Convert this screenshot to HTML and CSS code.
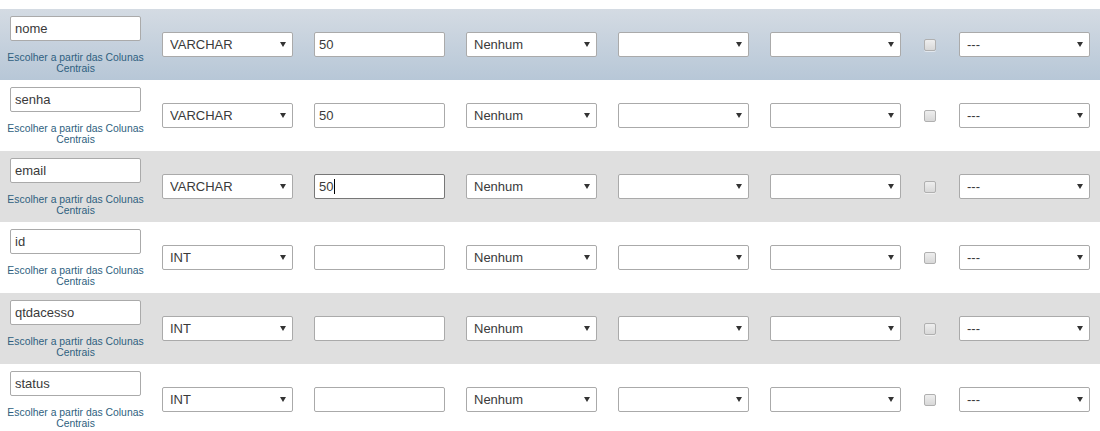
FILE: index.html
```html
<!DOCTYPE html>
<html lang="pt">
<head>
<meta charset="utf-8">
<title>Estrutura da tabela</title>
<link rel="stylesheet" href="styles.css">
</head>
<body>
<div class="table">
  <div class="row row-head">
    <div class="name-cell">
      <input class="field" type="text" value="nome">
      <a class="hint">Escolher a partir das Colunas<br>Centrais</a>
    </div>
    <span class="sel"><select><option>VARCHAR</option></select></span>
    <input class="field" type="text" value="50">
    <span class="sel"><select><option>Nenhum</option></select></span>
    <span class="sel"><select><option></option></select></span>
    <span class="sel"><select><option></option></select></span>
    <span class="check"></span>
    <span class="sel"><select><option>---</option></select></span>
  </div>
  <div class="row">
    <div class="name-cell">
      <input class="field" type="text" value="senha">
      <a class="hint">Escolher a partir das Colunas<br>Centrais</a>
    </div>
    <span class="sel"><select><option>VARCHAR</option></select></span>
    <input class="field" type="text" value="50">
    <span class="sel"><select><option>Nenhum</option></select></span>
    <span class="sel"><select><option></option></select></span>
    <span class="sel"><select><option></option></select></span>
    <span class="check"></span>
    <span class="sel"><select><option>---</option></select></span>
  </div>
  <div class="row row-odd">
    <div class="name-cell">
      <input class="field" type="text" value="email">
      <a class="hint">Escolher a partir das Colunas<br>Centrais</a>
    </div>
    <span class="sel"><select><option>VARCHAR</option></select></span>
    <span class="field field-focus">50<span class="caret"></span></span>
    <span class="sel"><select><option>Nenhum</option></select></span>
    <span class="sel"><select><option></option></select></span>
    <span class="sel"><select><option></option></select></span>
    <span class="check"></span>
    <span class="sel"><select><option>---</option></select></span>
  </div>
  <div class="row">
    <div class="name-cell">
      <input class="field" type="text" value="id">
      <a class="hint">Escolher a partir das Colunas<br>Centrais</a>
    </div>
    <span class="sel"><select><option>INT</option></select></span>
    <input class="field" type="text" value="">
    <span class="sel"><select><option>Nenhum</option></select></span>
    <span class="sel"><select><option></option></select></span>
    <span class="sel"><select><option></option></select></span>
    <span class="check"></span>
    <span class="sel"><select><option>---</option></select></span>
  </div>
  <div class="row row-odd">
    <div class="name-cell">
      <input class="field" type="text" value="qtdacesso">
      <a class="hint">Escolher a partir das Colunas<br>Centrais</a>
    </div>
    <span class="sel"><select><option>INT</option></select></span>
    <input class="field" type="text" value="">
    <span class="sel"><select><option>Nenhum</option></select></span>
    <span class="sel"><select><option></option></select></span>
    <span class="sel"><select><option></option></select></span>
    <span class="check"></span>
    <span class="sel"><select><option>---</option></select></span>
  </div>
  <div class="row">
    <div class="name-cell">
      <input class="field" type="text" value="status">
      <a class="hint">Escolher a partir das Colunas<br>Centrais</a>
    </div>
    <span class="sel"><select><option>INT</option></select></span>
    <input class="field" type="text" value="">
    <span class="sel"><select><option>Nenhum</option></select></span>
    <span class="sel"><select><option></option></select></span>
    <span class="sel"><select><option></option></select></span>
    <span class="check"></span>
    <span class="sel"><select><option>---</option></select></span>
  </div>
</div>
</body>
</html>
```

FILE: styles.css
```css
html, body {
  margin: 0;
  padding: 0;
  background: #ffffff;
  font-family: "Liberation Sans", Arial, sans-serif;
}

.table {
  margin-top: 9px;
}

.row {
  display: grid;
  grid-template-columns: 131px 131px 131px 131px 131px 131px 16px 131px;
  column-gap: 21px;
  align-items: center;
  height: 71px;
  padding-left: 10px;
  box-sizing: border-box;
  background: #ffffff;
}

.row-head {
  background: linear-gradient(to bottom, #d4dbe3 0%, #b7c7d7 100%);
}

.row-odd {
  background: #dfdfdf;
}

.name-cell {
  align-self: start;
  display: flex;
  flex-direction: column;
  align-items: center;
  padding-top: 7px;
}

.field {
  box-sizing: border-box;
  width: 131px;
  height: 25px;
  margin: 0;
  padding: 0 4px;
  border: 1px solid #aaaaaa;
  border-radius: 2px;
  background: #ffffff;
  font-family: "Liberation Sans", Arial, sans-serif;
  font-size: 13px;
  color: #3a3a3a;
  outline: none;
}

.field-focus {
  display: flex;
  align-items: center;
  border-color: #777777;
}

.caret {
  display: inline-block;
  width: 1px;
  height: 15px;
  margin-left: 1px;
  background: #000000;
}

.hint {
  display: block;
  width: 150px;
  margin-top: 11px;
  text-align: center;
  font-size: 10.4px;
  line-height: 11px;
  color: #2f5f80;
  white-space: nowrap;
}

.sel {
  position: relative;
  display: block;
  width: 131px;
  height: 25px;
}

.sel select {
  -webkit-appearance: none;
  appearance: none;
  box-sizing: border-box;
  width: 131px;
  height: 25px;
  margin: 0;
  padding: 0 20px 0 7px;
  border: 1px solid #aaaaaa;
  border-radius: 2px;
  background: #ffffff;
  font-family: "Liberation Sans", Arial, sans-serif;
  font-size: 13px;
  color: #3a3a3a;
  outline: none;
}

.sel::after {
  content: "";
  position: absolute;
  right: 7px;
  top: 10px;
  width: 0;
  height: 0;
  border-left: 3px solid transparent;
  border-right: 3px solid transparent;
  border-top: 5px solid #333333;
  pointer-events: none;
}

.check {
  justify-self: center;
  box-sizing: border-box;
  width: 12px;
  height: 12px;
  border: 1px solid #b0b0b0;
  border-radius: 2px;
  background: linear-gradient(to bottom, #eeeeee, #d8d8d8);
  box-shadow: 0 1px 0 rgba(255, 255, 255, 0.5);
}
```
